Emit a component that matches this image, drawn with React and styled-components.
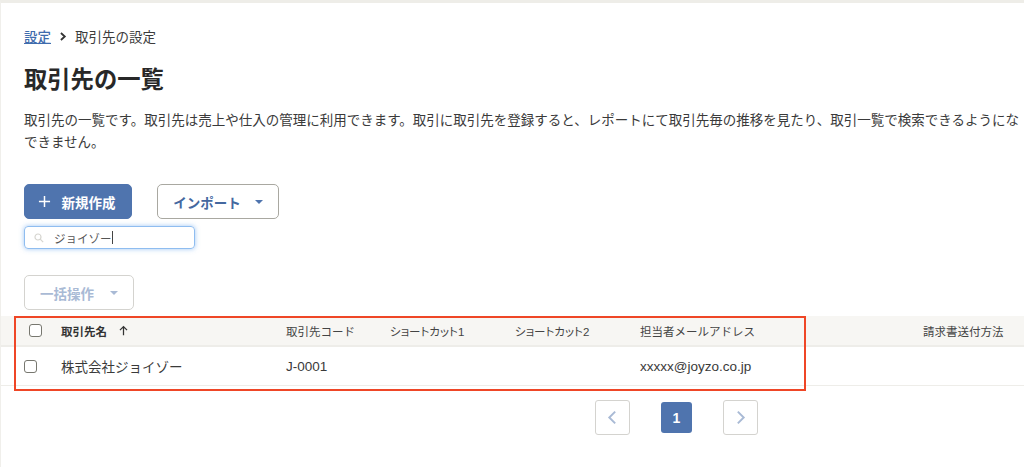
import React from "react";
import styled, { createGlobalStyle } from "styled-components";

const Global = createGlobalStyle`
  html, body { margin: 0; padding: 0; height: 100%; background: #fff; overflow: hidden; }
  body { font-family: "Liberation Sans", "Noto Sans CJK JP", sans-serif; color: #323232; }
`;
const Page = styled.div`
  position: relative; width: 1024px; height: 467px; box-sizing: border-box; overflow: hidden;
  border-top: 3px solid #eeede8; border-left: 1px solid #f0efeb; background: #fff;
`;
const Content = styled.div`padding: 23px 0 0 23px;`;
const Crumbs = styled.nav`display: flex; align-items: center; height: 20px; font-size: 13.5px; gap: 7px; color: #3c3c3c;`;
const CrumbLink = styled.a`color: #3f6cad; text-decoration: underline; font-weight: 500; margin-right: 1px;`;
const Title = styled.h1`margin: 17px 0 0; font-size: 23.3px; line-height: 34px; font-weight: 700; color: #282828;`;
const Desc = styled.p`margin: 13px 0 0; font-size: 13.5px; line-height: 22px; white-space: nowrap; color: #3a3a3a;`;
const Actions = styled.div`display: flex; gap: 25px; margin-top: 30px;`;
const Button = styled.button`
  display: flex; align-items: center; box-sizing: border-box; height: 35px; width: ${p => p.$w}px;
  padding: 0 ${p => p.$pr || 0}px 0 0; justify-content: center; border-radius: 5px; font: 700 13.5px "Liberation Sans", "Noto Sans CJK JP", sans-serif;
  border: 1px solid ${p => p.$primary ? "#4f74ae" : p.$disabled ? "#d4d3cf" : "#a9a8a1"};
  background: ${p => p.$primary ? "#4f74ae" : "#fff"};
  color: ${p => p.$primary ? "#fff" : p.$disabled ? "#a9bad5" : "#44689f"};
`;
const PlusLabel = styled.span`margin-left: 11px;`;
const Caret = styled.span`
  margin-left: ${p => p.$gap}px; width: 0; height: 0; border: 4.5px solid transparent; border-bottom: 0;
  border-top: 4.5px solid ${p => p.$disabled ? "#a9bad5" : "#4f74ae"};
`;
const SearchBox = styled.div`
  display: flex; align-items: center; box-sizing: border-box; margin-top: 7px; width: 171px; height: 23px; padding-left: 9px;
  border: 1px solid #8fbdf0; border-radius: 4px; box-shadow: 0 0 5px rgba(120,175,240,.7); font-size: 11.5px; color: #555;
`;
const SearchText = styled.span`margin-left: 10px;`;
const Cursor = styled.span`width: 1px; height: 13px; background: #444;`;
const Bulk = styled.div`margin-top: 26px;`;
const Table = styled.div`margin-top: 6px;`;
const Row = styled.div`
  display: grid; grid-template-columns: 60px 225px 104px 125px 125px 283px 1fr; align-items: center; box-sizing: border-box;
  height: ${p => p.$head ? 31 : 39}px; background: ${p => p.$head ? "#f7f6f3" : "#fff"};
  border-bottom: ${p => p.$head ? 2 : 1}px solid #eeede9;
  font-size: ${p => p.$head ? 11.5 : 13.5}px; color: ${p => p.$head ? "#444" : "#3a3a3a"};
`;
const CheckCell = styled.div`padding-left: ${p => p.$left}px; display: flex;`;
const Check = styled.span`
  display: block; box-sizing: border-box; width: 13px; height: 13px; border: 1px solid #77776f; border-radius: 3px; background: #fff;
`;
const NameHead = styled.div`display: flex; align-items: center; gap: 11px; font-weight: 700; color: #333;`;
const Shortcut = styled.div`font-feature-settings: "palt"; white-space: nowrap;`;
const Pager = styled.div`display: flex; align-items: center; margin: 14px 0 0 594px;`;
const PageBtn = styled.div`
  display: flex; align-items: center; justify-content: center; box-sizing: border-box; width: 35px; height: 35px;
  border: 1px solid #d4d3cf; border-radius: 3px; background: #fff; color: #a9bad5;
`;
const PageNow = styled.div`
  display: flex; align-items: center; justify-content: center; width: 31px; height: 31px; margin: 0 31px; border-radius: 3px;
  background: #4f74ae; color: #fff; font-size: 14px; font-weight: 700;
`;
const Annotation = styled.div`
  position: absolute; left: 13px; top: 313px; width: 792px; height: 75px; box-sizing: border-box;
  border: 2.5px solid #ef4626; pointer-events: none;
`;
const Glyph = ({ d, size = 14, color = "currentColor", w = 1.8 }) => (
  <svg width={size} height={size} viewBox="0 0 14 14" fill="none" stroke={color} strokeWidth={w}><path d={d} /></svg>
);

export default function App() {
  return (
    <Page>
      <Global />
      <Content>
        <Crumbs>
          <CrumbLink>設定</CrumbLink>
          <Glyph d="M3 1.5 9 7l-6 5.5" size={9} color="#333" w={2.8} />
          <span>取引先の設定</span>
        </Crumbs>
        <Title>取引先の一覧</Title>
        <Desc>
          取引先の一覧です。取引先は売上や仕入の管理に利用できます。取引に取引先を登録すると、レポートにて取引先毎の推移を見たり、取引一覧で検索できるようにな<br />
          できません。
        </Desc>
        <Actions>
          <Button $primary $w={108} $pr={3}>
            <Glyph d="M7 1v12M1 7h12" size={13} w={1.6} />
            <PlusLabel>新規作成</PlusLabel>
          </Button>
          <Button $w={122}>インポート<Caret $gap={14} /></Button>
        </Actions>
        <SearchBox>
          <svg width="10" height="10" viewBox="0 0 10 10" fill="none" stroke="#d6d5d0" strokeWidth="1.2">
            <circle cx="4" cy="4" r="3" /><path d="m6.2 6.2 3 3" />
          </svg>
          <SearchText>ジョイゾー</SearchText>
          <Cursor />
        </SearchBox>
        <Bulk>
          <Button $disabled $w={110}>一括操作<Caret $disabled $gap={16} /></Button>
        </Bulk>
      </Content>
      <Table>
        <Row $head>
          <CheckCell $left={28}><Check /></CheckCell>
          <NameHead>
            取引先名
            <Glyph d="M7 13V2M2.5 6.5 7 2l4.5 4.5" size={11} color="#333" w={1.6} />
          </NameHead>
          <div>取引先コード</div>
          <Shortcut>ショートカット1</Shortcut>
          <Shortcut>ショートカット2</Shortcut>
          <div>担当者メールアドレス</div>
          <div>請求書送付方法</div>
        </Row>
        <Row>
          <CheckCell $left={23}><Check /></CheckCell>
          <div>株式会社ジョイゾー</div>
          <div>J-0001</div>
          <div />
          <div />
          <div>xxxxx@joyzo.co.jp</div>
          <div />
        </Row>
      </Table>
      <Pager>
        <PageBtn><Glyph d="M9.5 1.5 4 7l5.5 5.5" size={15} /></PageBtn>
        <PageNow>1</PageNow>
        <PageBtn><Glyph d="M4.5 1.5 10 7l-5.5 5.5" size={15} /></PageBtn>
      </Pager>
      <Annotation />
    </Page>
  );
}
